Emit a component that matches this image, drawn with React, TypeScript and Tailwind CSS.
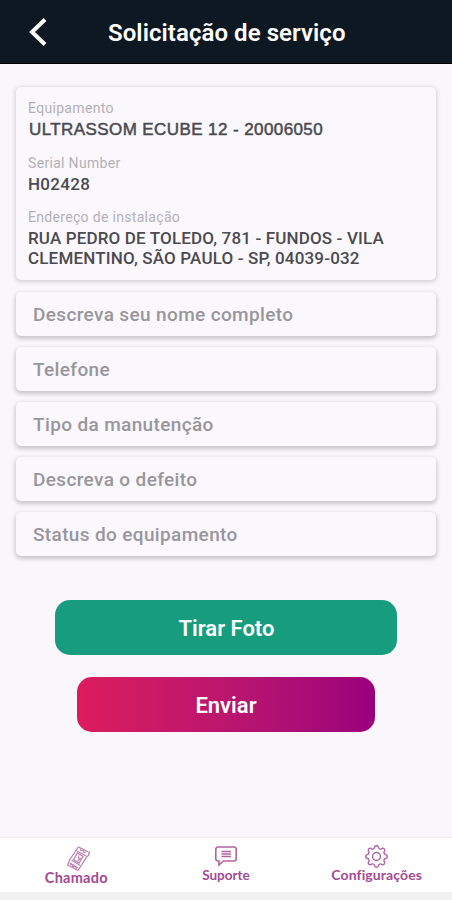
import { BsGear } from 'react-icons/bs';

const details = [
  {
    label: 'Equipamento',
    lines: [
      {
        text: 'ULTRASSOM ECUBE 12 - 20006050',
        style: "ml-px pt-px font-['Liberation_Sans',sans-serif] text-[17px] tracking-[0.41px] [-webkit-text-stroke:0.5px_#4b4a4f]",
      },
    ],
  },
  { label: 'Serial Number', lines: [{ text: 'H02428', style: 'text-[17px] tracking-[0.3px]' }] },
  {
    label: 'Endereço de instalação',
    lines: [
      { text: 'RUA PEDRO DE TOLEDO, 781 - FUNDOS - VILA', style: 'text-[17px] tracking-[0.15px]' },
      { text: 'CLEMENTINO, SÃO PAULO - SP, 04039-032', style: 'text-[17px] tracking-[0.17px]' },
    ],
  },
];

const fields = [
  'Descreva seu nome completo',
  'Telefone',
  'Tipo da manutenção',
  'Descreva o defeito',
  'Status do equipamento',
];

function TicketIcon() {
  return (
    <svg width="26" height="28" viewBox="0 0 26 28" fill="none" stroke="#bd82b0" strokeWidth="1.3">
      <path d="M13.500 2 24.500 7.500l-1 3-1.500 1L13 25.500 2.500 20l1.500-3 .5-2z" />
      <path d="m12 6 9 5M6.500 15l8.500 5.500M5 18l8 5" />
      <path d="m12.500 8 5.500 3.500-4 6.500-5.500-3.500z" />
      <path d="m14 10.500-.5 2.500 2 .5-3 2.500M15 3.500l1 2 2-.500 1 2.500 2-.500M5 20l1.500-1 1.500 3 2-1 1.500 3" strokeWidth="1.100" />
    </svg>
  );
}

function SupportIcon() {
  return (
    <svg width="24" height="22" viewBox="0 0 24 22" fill="none" stroke="#b264a4" strokeWidth="1.600">
      <path d="M4 2h16a2.200 2.200 0 0 1 2.200 2.200v9.600A2.200 2.200 0 0 1 20 16H9.500L5 20v-4H4a2.200 2.200 0 0 1-2.200-2.200V4.200A2.200 2.200 0 0 1 4 2z" />
      <path d="M7.500 6.500h9.500M7.500 9h9.500M7.500 11.500h9.500" />
    </svg>
  );
}

function Header() {
  return (
    <header className="flex h-16 shrink-0 items-center border-b border-black bg-[#0e1823] pl-7 text-white">
      <button aria-label="Voltar" className="h-[30px] w-5">
        <svg width="20" height="30" viewBox="0 0 20 30" fill="none" stroke="currentColor" strokeWidth="4">
          <path d="M17 2.500 4 15l13 12.500" />
        </svg>
      </button>
      <h1 className="ml-[60px] pt-0.5 text-[24px] leading-8 font-semibold tracking-[0.06px] whitespace-nowrap">Solicitação de serviço</h1>
    </header>
  );
}

function App() {
  return (
    <div className="flex h-[900px] w-[452px] flex-col overflow-hidden bg-[#f9f7fc] font-['Roboto',sans-serif]">
      <Header />

      <main className="flex-1 px-4 pt-[23px]">
        <section className="h-[193px] rounded-[5px] bg-[#faf8fd] px-3 pt-[11px] shadow-[0_1px_4px_1px_rgba(0,0,0,0.16)]">
          {details.map((item) => (
            <div key={item.label} className="mb-[14.500px]">
              <p className="h-5 text-[14px] leading-5 tracking-[0.32px] text-[#b3b1b6]">{item.label}</p>
              {item.lines.map((line) => (
                <p key={line.text} className={`h-5 leading-[22px] font-medium whitespace-nowrap text-[#4b4a4f] ${line.style}`}>
                  {line.text}
                </p>
              ))}
            </div>
          ))}
        </section>

        <form className="mt-3 flex flex-col gap-[11px]">
          {fields.map((field) => (
            <input
              key={field}
              placeholder={field}
              className="h-11 rounded-[5px] bg-[#faf8fd] px-[17px] text-[19px] font-medium tracking-[0.36px] shadow-[0_2px_4px_1px_rgba(0,0,0,0.2)] outline-none placeholder:text-[#98969b]"
            />
          ))}
        </form>

        <div className="mt-11 flex flex-col items-center gap-[22px] text-[22px] font-semibold text-white">
          <button className="h-[55px] w-[342px] rounded-[15px] bg-[#179c7d] pt-0.5 pl-px">Tirar Foto</button>
          <button className="h-[55px] w-[298px] rounded-[15px] bg-linear-to-r from-[#dc1c5c] to-[#9b007c] pt-0.5">Enviar</button>
        </div>
      </main>

      <nav className="grid h-[54px] shrink-0 grid-cols-3 bg-white font-['Lato',sans-serif] text-[14.500px] leading-4 font-bold text-[#a34a92] shadow-[0_-1px_2px_rgba(0,0,0,0.06)]">
        <a className="flex flex-col items-center pt-[7px] pl-1.5">
          <TicketIcon />
          <span className="-mt-[3px] -ml-1 tracking-[0.25px]">Chamado</span>
        </a>
        <a className="flex flex-col items-center pt-[7px]">
          <SupportIcon />
          <span className="text-[13.500px]">Suporte</span>
        </a>
        <a className="flex flex-col items-center pt-[7px]">
          <BsGear size={23} color="#b264a4" />
          <span className="-mt-px text-[14px] tracking-[0.1px]">Configurações</span>
        </a>
      </nav>
      <div className="h-2 shrink-0 bg-[#f1f1f2]" />
    </div>
  );
}

export default App;
